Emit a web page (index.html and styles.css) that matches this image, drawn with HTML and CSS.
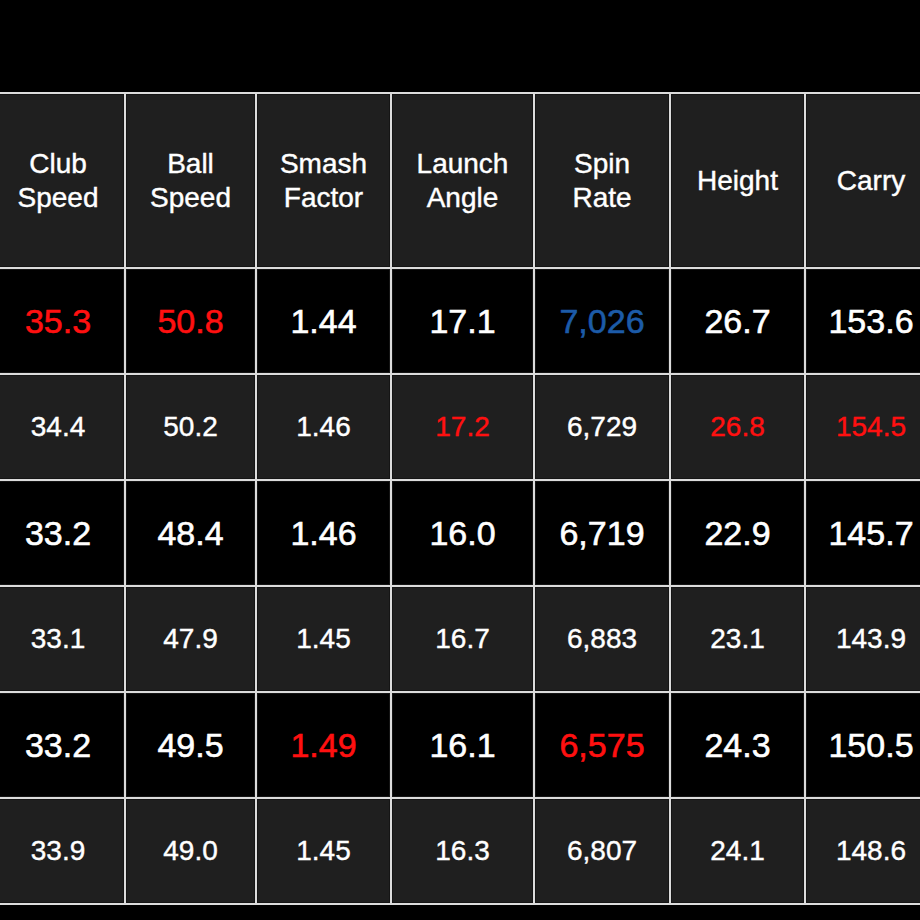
FILE: index.html
```html
<!DOCTYPE html>
<html>
<head>
<meta charset="utf-8">
<link rel="stylesheet" href="styles.css">
</head>
<body>
<div class="wrap">
<table class="stats">
  <colgroup>
    <col class="c1"><col class="c2"><col class="c3"><col class="c4"><col class="c5"><col class="c6"><col class="c7">
  </colgroup>
  <thead>
    <tr>
      <th>Club<br>Speed</th>
      <th>Ball<br>Speed</th>
      <th>Smash<br>Factor</th>
      <th>Launch<br>Angle</th>
      <th>Spin<br>Rate</th>
      <th>Height</th>
      <th>Carry</th>
    </tr>
  </thead>
  <tbody>
    <tr class="big">
      <td class="red">35.3</td><td class="red">50.8</td><td>1.44</td><td>17.1</td><td class="blue">7,026</td><td>26.7</td><td>153.6</td>
    </tr>
    <tr class="small">
      <td>34.4</td><td>50.2</td><td>1.46</td><td class="red">17.2</td><td>6,729</td><td class="red">26.8</td><td class="red">154.5</td>
    </tr>
    <tr class="big">
      <td>33.2</td><td>48.4</td><td>1.46</td><td>16.0</td><td>6,719</td><td>22.9</td><td>145.7</td>
    </tr>
    <tr class="small">
      <td>33.1</td><td>47.9</td><td>1.45</td><td>16.7</td><td>6,883</td><td>23.1</td><td>143.9</td>
    </tr>
    <tr class="big">
      <td>33.2</td><td>49.5</td><td class="red">1.49</td><td>16.1</td><td class="red">6,575</td><td>24.3</td><td>150.5</td>
    </tr>
    <tr class="small">
      <td>33.9</td><td>49.0</td><td>1.45</td><td>16.3</td><td>6,807</td><td>24.1</td><td>148.6</td>
    </tr>
  </tbody>
</table>
</div>
</body>
</html>
```

FILE: styles.css
```css
html, body {
  margin: 0;
  padding: 0;
  background: #000;
}

body {
  width: 920px;
  height: 920px;
  overflow: hidden;
  font-family: "Liberation Sans", Arial, sans-serif;
  color: #fff;
}

.wrap {
  padding-top: 92px;
  margin-left: -10px;
}

.stats {
  border-collapse: separate;
  border-spacing: 2px;
  background: #dcdcdc;
  table-layout: fixed;
  width: 948px;
}

.c1 { width: 132px; }
.c2 { width: 129px; }
.c3 { width: 133px; }
.c4 { width: 141px; }
.c5 { width: 134px; }
.c6 { width: 133px; }
.c7 { width: 130px; }

.stats th,
.stats td {
  padding: 0;
  text-align: center;
  vertical-align: middle;
  box-shadow: inset 0 0 0 1px #151515;
  -webkit-text-stroke: 0.4px currentColor;
}

.stats th {
  height: 173px;
  background: #1f1f1f;
  font-weight: normal;
  font-size: 28px;
  line-height: 34px;
}

.stats td {
  height: 104px;
}

.big td {
  background: #000;
  font-size: 34px;
  -webkit-text-stroke: 0.6px currentColor;
}

.small td {
  background: #1f1f1f;
  font-size: 28px;
}

.stats td.red { color: #ff1010; }
.stats td.blue { color: #1c5ba8; }
```
